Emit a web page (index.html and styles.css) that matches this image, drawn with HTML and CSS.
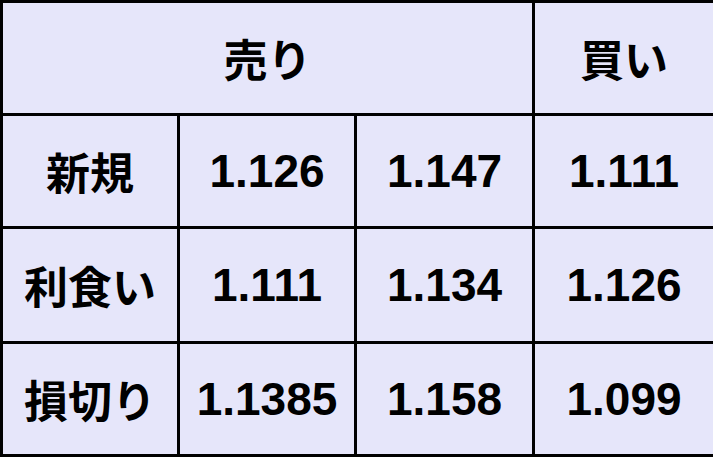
FILE: index.html
```html
<!DOCTYPE html>
<html lang="ja">
<head>
<meta charset="utf-8">
<title>売買レート</title>
<link rel="stylesheet" href="styles.css">
</head>
<body>
<table class="rates">
  <colgroup>
    <col class="c1"><col class="c2"><col class="c3"><col class="c4">
  </colgroup>
  <tr class="r1">
    <th class="jp" colspan="3">売り</th>
    <th class="jp">買い</th>
  </tr>
  <tr class="r2">
    <th class="jp">新規</th>
    <td class="num">1.126</td>
    <td class="num">1.147</td>
    <td class="num">1.111</td>
  </tr>
  <tr class="r3">
    <th class="jp">利食い</th>
    <td class="num">1.111</td>
    <td class="num">1.134</td>
    <td class="num">1.126</td>
  </tr>
  <tr class="r4">
    <th class="jp">損切り</th>
    <td class="num">1.1385</td>
    <td class="num">1.158</td>
    <td class="num">1.099</td>
  </tr>
</table>
</body>
</html>
```
FILE: styles.css
```css
html, body {
  margin: 0;
  padding: 0;
  overflow: hidden;
  background: #e6e6fa;
}

.rates {
  border-collapse: separate;
  border-spacing: 3px;
  background: #000;
  table-layout: fixed;
  width: 716px;
}

.c1 { width: 174px; }
.c2 { width: 174px; }
.c3 { width: 175px; }
.c4 { width: 178px; }

.rates th,
.rates td {
  background: #e6e6fa;
  color: #000;
  padding: 0;
  text-align: center;
  vertical-align: middle;
  white-space: nowrap;
}

.r1 { height: 110px; }
.r2 { height: 110px; }
.r3 { height: 112px; }
.r4 { height: 110px; }

.jp {
  font-family: "Noto Sans CJK JP", "Noto Sans", sans-serif;
  font-weight: 700;
  font-size: 44px;
}

.num {
  font-family: "Liberation Sans", Arial, sans-serif;
  font-weight: 700;
  font-size: 46px;
}
```
